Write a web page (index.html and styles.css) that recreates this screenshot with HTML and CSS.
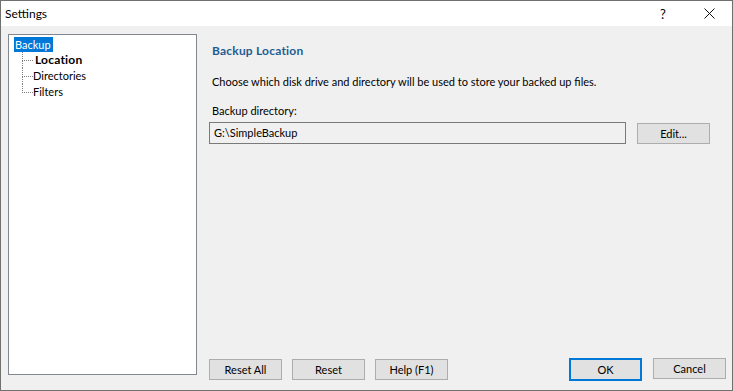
FILE: index.html
```html
<!DOCTYPE html>
<html lang="en">
<head>
    <meta charset="UTF-8">
    <title>Settings</title>
    <link rel="stylesheet" href="styles.css">
</head>
<body>
    <div class="window">
        <header class="titlebar">
            <span class="title">Settings</span>
            <div class="caption-btns">
                <span class="cap-btn help">?</span>
                <span class="cap-btn close">
                    <svg width="11" height="11" viewBox="0 0 11 11">
                        <path d="M0.5 0.5 L10.5 10.5 M10.5 0.5 L0.5 10.5" stroke="#111" stroke-width="1" fill="none"/>
                    </svg>
                </span>
            </div>
        </header>

        <div class="client">
            <div class="tree">
                <div class="node root"><span class="sel">Backup</span></div>
                <ul class="children">
                    <li class="node current">Location</li>
                    <li class="node">Directories</li>
                    <li class="node">Filters</li>
                </ul>
            </div>

            <div class="pane">
                <div class="content">
                    <h2 class="heading">Backup Location</h2>
                    <p class="desc">Choose which disk drive and directory will be used to store your backed up files.</p>
                    <label class="field-label">Backup directory:</label>
                    <div class="field-row">
                        <div class="path-box">G:\SimpleBackup</div>
                        <button class="btn">Edit...</button>
                    </div>
                </div>

                <div class="footer">
                    <div class="group">
                        <button class="btn">Reset All</button>
                        <button class="btn">Reset</button>
                        <button class="btn">Help (F1)</button>
                    </div>
                    <div class="group">
                        <button class="btn default">OK</button>
                        <button class="btn">Cancel</button>
                    </div>
                </div>
            </div>
        </div>
    </div>
</body>
</html>
```

FILE: styles.css
```css
:root {
    --face: #F0F0F0;
    --btn: #E1E1E1;
    --btn-border: #ADADAD;
    --accent: #0078D7;
    --heading: #1E5D92;
}

* {
    margin: 0;
    padding: 0;
    box-sizing: border-box;
    font-family: Lato, 'Liberation Sans', sans-serif;
    font-size: 11px;
    line-height: 16px;
    color: #000;
}

body {
    width: 733px;
    height: 391px;
    overflow: hidden;
}

.window {
    width: 733px;
    height: 391px;
    border: 1px solid #707070;
    display: flex;
    flex-direction: column;
    background: var(--face);
}

.titlebar {
    height: 25px;
    background: #fff;
    display: flex;
    align-items: center;
    justify-content: space-between;
}

.title {
    padding-left: 4px;
    font-size: 12px;
}

.caption-btns {
    display: flex;
    height: 100%;
}

.cap-btn {
    width: 46px;
    height: 100%;
    display: flex;
    align-items: center;
    justify-content: center;
}

.cap-btn.help {
    font-size: 13px;
}

.client {
    flex: 1;
    display: flex;
    padding: 8px 6px 10px 7px;
}

/* left tree */
.tree {
    width: 189px;
    margin-bottom: 5px;
    background: #fff;
    border: 1px solid #828790;
    padding: 1px 0 0 5px;
}

.node {
    height: 16px;
    list-style: none;
}

.sel {
    display: inline-block;
    background: var(--accent);
    color: #fff;
    padding: 0 2px 0 1px;
    height: 15px;
    line-height: 15px;
    margin-top: 1px;
}

.children .node {
    position: relative;
    padding-left: 19px;
}

.children .node::before {
    content: "";
    position: absolute;
    left: 8px;
    top: 0;
    width: 10px;
    height: 8px;
    border-left: 1px dotted #808080;
    border-bottom: 1px dotted #808080;
}

.children .node:not(:last-child)::after {
    content: "";
    position: absolute;
    left: 8px;
    top: 8px;
    height: 8px;
    border-left: 1px dotted #808080;
}

.node.current {
    font-weight: 700;
    font-size: 12px;
    letter-spacing: 0.2px;
    padding-left: 21px;
}

/* right pane */
.pane {
    flex: 1;
    display: flex;
    flex-direction: column;
    justify-content: space-between;
    padding-left: 12px;
}

.content {
    padding: 9px 16px 0 0;
}

.heading {
    font-weight: 700;
    font-size: 12px;
    letter-spacing: 0.2px;
    color: var(--heading);
    padding-left: 3px;
}

.desc {
    margin-top: 15px;
    padding-left: 3px;
}

.field-label {
    display: block;
    margin-top: 13px;
    padding-left: 3px;
}

.field-row {
    display: flex;
    gap: 11px;
    margin-top: 3px;
}

.path-box {
    flex: 1;
    height: 22px;
    border: 1px solid #7A7A7A;
    background: var(--face);
    padding: 2px 4px;
}

.btn {
    width: 73px;
    height: 21px;
    background: var(--btn);
    border: 1px solid var(--btn-border);
    font-family: Lato, 'Liberation Sans', sans-serif;
    font-size: 11px;
}

.field-row .btn {
    margin-top: 1px;
}

.footer {
    display: flex;
    justify-content: space-between;
    align-items: flex-end;
}

.group {
    display: flex;
    gap: 10px;
}

.group:last-child {
    gap: 11px;
}

.btn.default {
    border: 2px solid var(--accent);
    height: 23px;
    margin-bottom: -1px;
}
```
